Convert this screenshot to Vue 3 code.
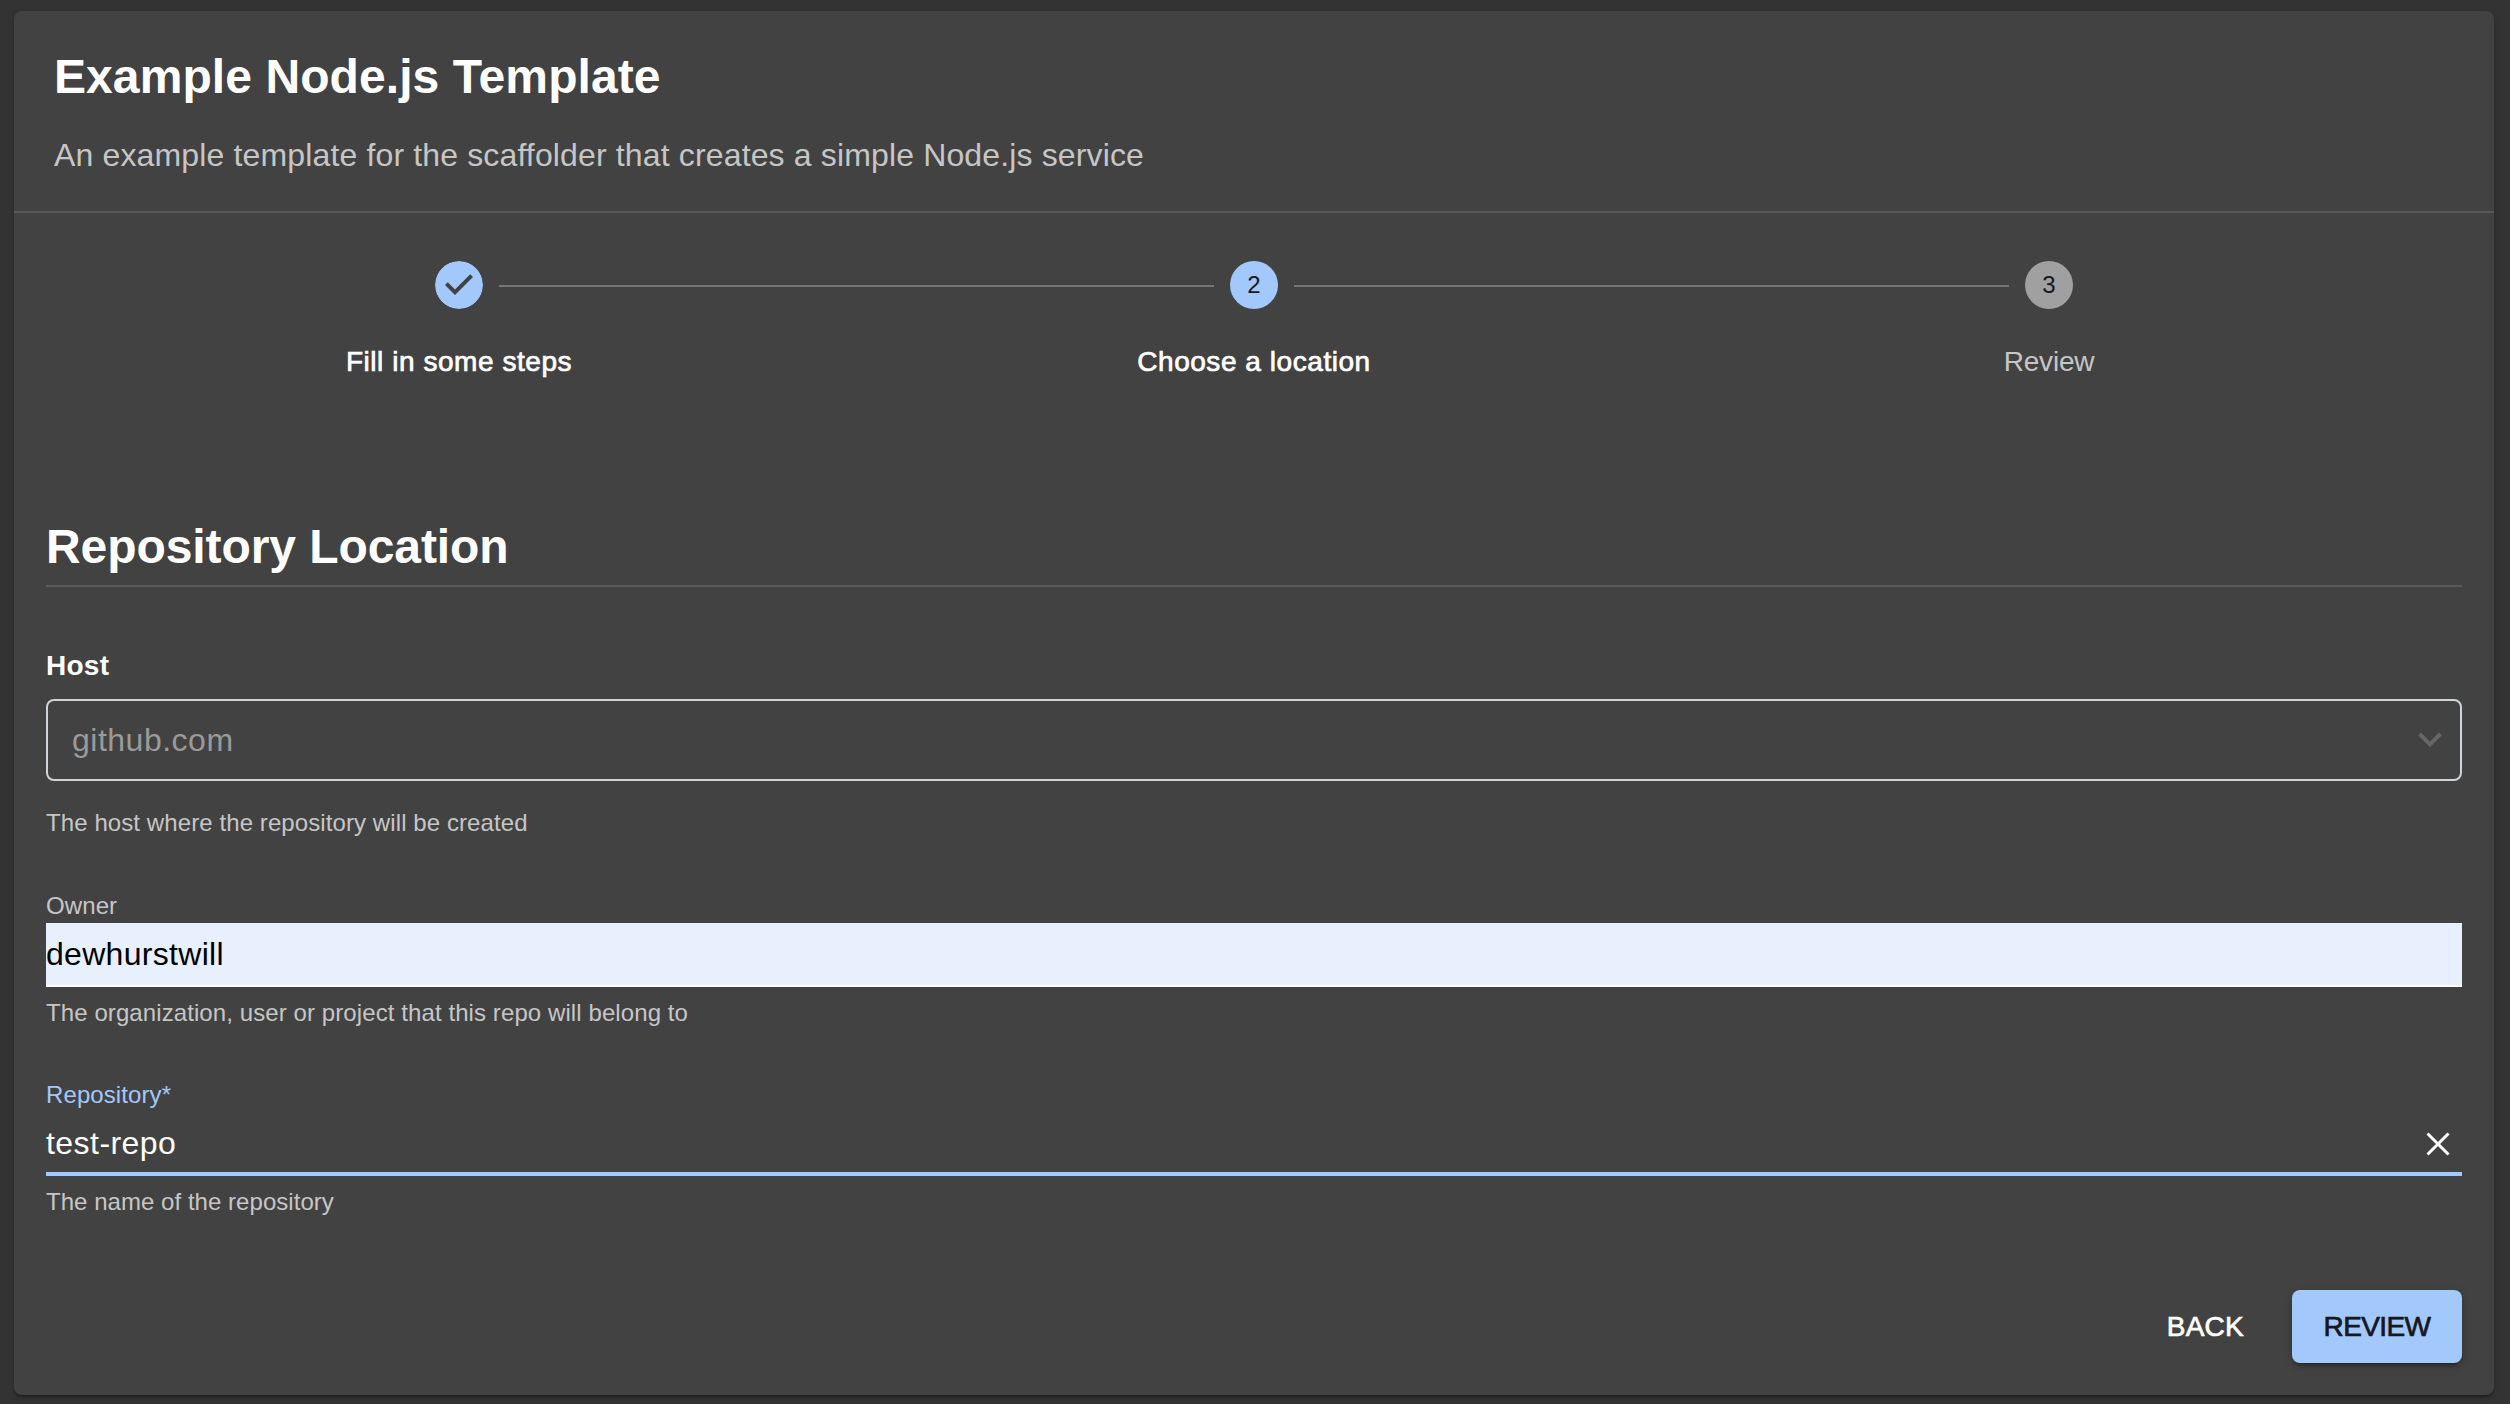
<script setup>
const steps = [
  { label: 'Fill in some steps', state: 'done' },
  { label: 'Choose a location', state: 'active' },
  { label: 'Review', state: 'pending' },
]
</script>

<template>
  <main class="page">
    <section class="card">
      <header class="head">
        <h1 class="title">Example Node.js Template</h1>
        <p class="subtitle">An example template for the scaffolder that creates a simple Node.js service</p>
      </header>
      <nav class="stepper">
        <div class="track">
          <template v-for="(s, i) in steps" :key="s.label">
            <span v-if="i" class="line"></span>
            <svg v-if="s.state === 'done'" class="dot" viewBox="0 0 24 24"><path fill="#a3c8fb" d="M12 0a12 12 0 1 0 0 24 12 12 0 0 0 0-24zm-2 17l-5-5 1.4-1.4 3.6 3.6 7.6-7.6L19 8l-9 9z" /></svg>
            <span v-else class="dot" :class="s.state">{{ i + 1 }}</span>
          </template>
        </div>
        <div class="labels">
          <span v-for="s in steps" :key="s.label" :class="['label', s.state]">{{ s.label }}</span>
        </div>
      </nav>
      <form class="form">
        <h2 class="section">Repository Location</h2>
        <label class="host">Host</label>
        <div class="select">
          <span>github.com</span>
          <svg class="chevron" viewBox="0 0 24 16"><path d="M1.600 1.900L12 12.500 22.400 1.900" fill="none" stroke="#666" stroke-width="4" /></svg>
        </div>
        <p class="hint host-hint">The host where the repository will be created</p>
        <label class="field-label">Owner</label>
        <div class="field filled">dewhurstwill</div>
        <p class="hint owner-hint">The organization, user or project that this repo will belong to</p>
        <label class="field-label focus">Repository*</label>
        <div class="field focused">
          <span>test-repo</span>
          <svg class="close" viewBox="0 0 24 24"><path d="M1.500 1.500l21 21M22.500 1.500l-21 21" fill="none" stroke="#fff" stroke-width="3" /></svg>
        </div>
        <p class="hint repo-hint">The name of the repository</p>
        <div class="actions">
          <button type="button" class="btn">BACK</button>
          <button type="button" class="btn primary">REVIEW</button>
        </div>
      </form>
    </section>
  </main>
</template>

<style>
body { margin: 0; background: #333; }
</style>

<style scoped>
* { box-sizing: border-box; }
h1, h2, p { margin: 0; font-weight: 400; }
.page { width: 2510px; height: 1404px; padding: 11px 16px 9px 14px; background: #333; color: #fff; overflow: hidden; font-family: "Liberation Sans", Arial, sans-serif; }
.card { height: 1384px; border-radius: 8px; background: #424242; box-shadow: 0 4px 2px -2px rgba(0,0,0,.2), 0 2px 2px rgba(0,0,0,.14), 0 2px 6px rgba(0,0,0,.12); }
.head { height: 202px; padding: 38px 40px 0; border-bottom: 2px solid #595959; }
.title { font-size: 48px; line-height: 56px; font-weight: 700; letter-spacing: .08px; }
.subtitle { margin-top: 30px; font-size: 32px; line-height: 40px; color: #c6c6c6; letter-spacing: .145px; }
.stepper { padding-top: 48px; }
.track { display: flex; align-items: center; gap: 16px; padding: 0 421px; }
.line { flex: 1; height: 2px; margin-top: 2px; background: #757575; }
.dot { flex: none; width: 48px; height: 48px; border-radius: 50%; text-align: center; font-size: 24px; line-height: 48px; color: #14181f; }
.dot.active { background: #a3c8fb; }
.dot.pending { background: #a0a0a0; }
.labels { display: grid; grid-template-columns: repeat(3, 1fr); margin: 33px 47.5px 0; text-align: center; font-size: 28px; line-height: 40px; }
.label { -webkit-text-stroke: .7px currentColor; letter-spacing: .55px; }
.label.pending { color: #c6c6c6; -webkit-text-stroke: 0; letter-spacing: -.2px; }
.form { display: flex; flex-direction: column; padding: 134px 32px 0; }
.section { height: 71px; padding-top: 1px; border-bottom: 2px solid #595959; font-size: 48px; line-height: 60px; font-weight: 700; letter-spacing: -.08px; }
.host { margin-top: 59px; font-size: 28px; line-height: 40px; font-weight: 700; letter-spacing: .25px; }
.select { display: flex; align-items: center; justify-content: space-between; height: 82px; margin-top: 13px; padding: 0 18px 0 24px; border: 2px solid #ced4da; border-radius: 8px; font-size: 32px; letter-spacing: .5px; color: #9a9a9a; }
.chevron { width: 24px; height: 16px; }
.hint { font-size: 24px; line-height: 32px; color: #c6c6c6; letter-spacing: .09px; }
.host-hint { margin-top: 26px; }
.field-label { margin-top: 51px; font-size: 24px; line-height: 32px; color: #c6c6c6; letter-spacing: .1px; }
.field-label.focus { margin-top: 50px; color: #a3c8fb; }
.field { display: flex; align-items: center; font-size: 32px; }
.filled { height: 64px; margin-top: 1px; background: #e8f0fe; border-bottom: 2px solid #fff; color: #000; letter-spacing: .3px; }
.focused { justify-content: space-between; height: 65px; padding: 4px 12px 0 0; border-bottom: 4px solid #a3c8fb; letter-spacing: .45px; }
.close { width: 24px; height: 24px; }
.owner-hint, .repo-hint { margin-top: 10px; }
.repo-hint { letter-spacing: .04px; }
.actions { display: flex; justify-content: flex-end; margin-top: 72px; }
.btn { height: 73px; padding: 1px 32px 0; border: 0; border-radius: 8px; background: none; color: #fff; font: 28px/40px "Liberation Sans", Arial, sans-serif; letter-spacing: .25px; -webkit-text-stroke: .7px currentColor; }
.primary { width: 170px; margin-left: 16px; padding: 1px 0 0; background: #a3c8fb; color: #14181f; letter-spacing: -.6px; box-shadow: 0 6px 2px -4px rgba(0,0,0,.2), 0 4px 4px rgba(0,0,0,.14), 0 2px 10px rgba(0,0,0,.12); }
</style>
